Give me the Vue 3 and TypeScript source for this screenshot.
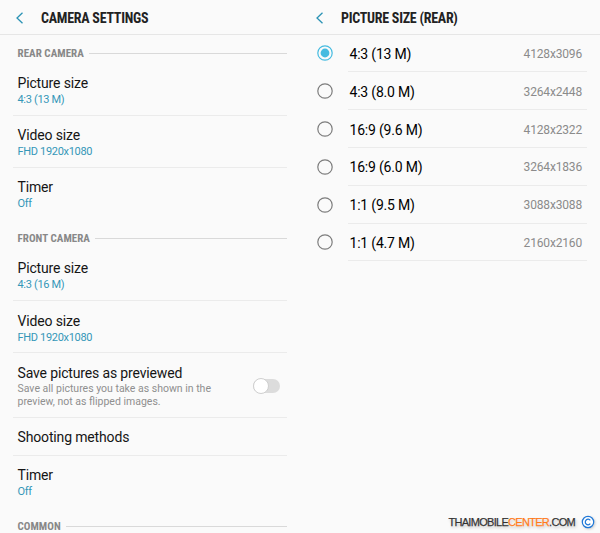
<script setup lang="ts">
interface Item {
  title: string
  value?: string
  hint?: string[]
  toggle?: boolean
}
interface Section {
  name: string
  items: Item[]
}
interface Size {
  label: string
  pixels: string
}

const sections: Section[] = [
  {
    name: 'REAR CAMERA',
    items: [
      { title: 'Picture size', value: '4:3 (13 M)' },
      { title: 'Video size', value: 'FHD 1920x1080' },
      { title: 'Timer', value: 'Off' },
    ],
  },
  {
    name: 'FRONT CAMERA',
    items: [
      { title: 'Picture size', value: '4:3 (16 M)' },
      { title: 'Video size', value: 'FHD 1920x1080' },
      {
        title: 'Save pictures as previewed',
        hint: ['Save all pictures you take as shown in the', 'preview, not as flipped images.'],
        toggle: true,
      },
      { title: 'Shooting methods' },
      { title: 'Timer', value: 'Off' },
    ],
  },
  { name: 'COMMON', items: [] },
]

const sizes: Size[] = [
  { label: '4:3 (13 M)', pixels: '4128x3096' },
  { label: '4:3 (8.0 M)', pixels: '3264x2448' },
  { label: '16:9 (9.6 M)', pixels: '4128x2322' },
  { label: '16:9 (6.0 M)', pixels: '3264x1836' },
  { label: '1:1 (9.5 M)', pixels: '3088x3088' },
  { label: '1:1 (4.7 M)', pixels: '2160x2160' },
]
const selected = 0
</script>

<template>
  <main class="screen">
    <section class="pane">
      <header class="bar">
        <svg class="back" viewBox="0 0 8 12"><path d="M6.5 .7 1 6l5.5 5.3" /></svg>
        <h1 class="heading">CAMERA SETTINGS</h1>
      </header>
      <div v-for="s in sections" :key="s.name">
        <div class="group"><span class="group-name">{{ s.name }}</span><i class="rule"></i></div>
        <div
          v-for="item in s.items"
          :key="item.title"
          class="item"
          :class="{ tall: item.hint, short: !item.hint && !item.value }"
        >
          <div class="copy">
            <div class="title">{{ item.title }}</div>
            <div v-if="item.value" class="value">{{ item.value }}</div>
            <div v-for="line in item.hint" :key="line" class="hint">{{ line }}</div>
          </div>
          <span v-if="item.toggle" class="switch"><i class="knob"></i></span>
        </div>
      </div>
    </section>

    <section class="pane">
      <header class="bar">
        <svg class="back" viewBox="0 0 8 12"><path d="M6.5 .7 1 6l5.5 5.3" /></svg>
        <h1 class="heading">PICTURE SIZE (REAR)</h1>
      </header>
      <div v-for="(size, i) in sizes" :key="size.label" class="option">
        <svg class="radio" :class="{ on: i === selected }" viewBox="0 0 16 16">
          <circle class="ring" cx="8" cy="8" r="7.2" />
          <circle v-if="i === selected" class="dot" cx="8" cy="8" r="4.4" />
        </svg>
        <div class="choice">
          <span class="label">{{ size.label }}</span>
          <span class="pixels">{{ size.pixels }}</span>
        </div>
      </div>
    </section>

    <footer class="mark">
      <span class="site">THAIMOBILE<b>CENTER</b>.COM</span>
      <svg class="copyright" viewBox="0 0 14 14">
        <circle cx="7" cy="7" r="5.7" />
        <path d="M9.3 5.3A2.8 2.8 0 1 0 9.3 8.7" />
      </svg>
    </footer>
  </main>
</template>

<style>
body {
  margin: 0;
  background: #fafafa;
}
</style>

<style scoped>
.screen {
  position: relative;
  display: flex;
  width: 600px;
  height: 533px;
  overflow: hidden;
  background: #fafafa;
  font-family: Roboto, sans-serif;
  color: #151515;
}
.pane {
  width: 300px;
}
.bar {
  display: flex;
  align-items: center;
  box-sizing: border-box;
  height: 34.6px;
  padding: 2px 0 0 16px;
  border-bottom: 1px solid #e6e6e6;
}
.back {
  width: 8px;
  height: 12px;
  margin-right: 17px;
  fill: none;
  stroke: #2b93b5;
  stroke-width: 1.3;
}
.heading {
  margin: 0;
  padding-top: 1px;
  font: 700 14px/20px 'Roboto Condensed', Roboto, sans-serif;
  font-stretch: 75%;
  letter-spacing: -0.26px;
  color: #222;
  white-space: nowrap;
}
.group {
  display: flex;
  align-items: center;
  box-sizing: border-box;
  height: 28.9px;
  padding: 0 13px 0 17.5px;
}
.group-name {
  padding-top: 9px;
  font: 700 11px/20px 'Roboto Condensed', Roboto, sans-serif;
  font-stretch: 75%;
  letter-spacing: 0.04px;
  color: #888;
  white-space: nowrap;
}
.rule {
  flex: 1;
  height: 1px;
  margin: 8px 0 0 5px;
  background: #d9d9d9;
}
.item {
  display: flex;
  box-sizing: border-box;
  height: 52.2px;
  margin: 0 13px;
  padding: 10.4px 0 0 4.5px;
  border-bottom: 1px solid #ebebeb;
}
.item:last-child {
  border-bottom-color: transparent;
}
.tall {
  height: 64.5px;
}
.short {
  height: 37.8px;
}
.copy {
  flex: 1;
}
.title {
  font-size: 14px;
  line-height: 19px;
  letter-spacing: -0.15px;
  white-space: nowrap;
}
.value {
  font-size: 11px;
  line-height: 14px;
  letter-spacing: -0.32px;
  color: #3597b8;
}
.hint {
  font-size: 10.5px;
  line-height: 12.8px;
  color: #8f8f8f;
  white-space: nowrap;
}
.switch {
  width: 27px;
  height: 14px;
  margin: 14.8px 7px 0 0;
  border-radius: 8px;
  background: #dcdcdc;
}
.knob {
  display: block;
  box-sizing: border-box;
  width: 16px;
  height: 16px;
  margin-top: -1px;
  border: 1px solid #cfcfcf;
  border-radius: 50%;
  background: #fff;
}
.option {
  display: flex;
  align-items: center;
  height: 37.8px;
  padding: 0 13px 0 17px;
}
.radio {
  width: 16px;
  height: 16px;
  margin-right: 15px;
  fill: none;
  stroke: #7c7c7c;
  stroke-width: 1.2;
}
.on {
  stroke: #45bbe0;
}
.on .dot {
  fill: #45bbe0;
  stroke: none;
}
.choice {
  flex: 1;
  display: flex;
  align-items: center;
  justify-content: space-between;
  box-sizing: border-box;
  height: 100%;
  padding: 2px 5px 0 1.5px;
  border-bottom: 1px solid #ebebeb;
}
.label {
  font-size: 14px;
  font-weight: 450;
  color: #000;
  letter-spacing: -0.2px;
}
.pixels {
  font-size: 12px;
  letter-spacing: -0.17px;
  color: #8b8b8b;
}
.mark {
  position: absolute;
  right: 5px;
  bottom: 4px;
  display: flex;
  align-items: center;
  gap: 6px;
}
.site {
  font: 11px/14px 'Liberation Sans', Arial, sans-serif;
  letter-spacing: -0.7px;
  color: #333;
  text-shadow: 0 0 1px #fff, 1px 2px 3px #bbb;
  -webkit-text-stroke: 0.25px currentColor;
}
.site b {
  font-weight: 400;
  color: #ff7a1a;
}
.copyright {
  width: 14px;
  height: 14px;
  fill: none;
  stroke: #1f78d8;
  stroke-width: 1.2;
  filter: drop-shadow(1px 1px 1px #ccc);
}
.copyright circle {
  fill: #fff;
}
</style>
